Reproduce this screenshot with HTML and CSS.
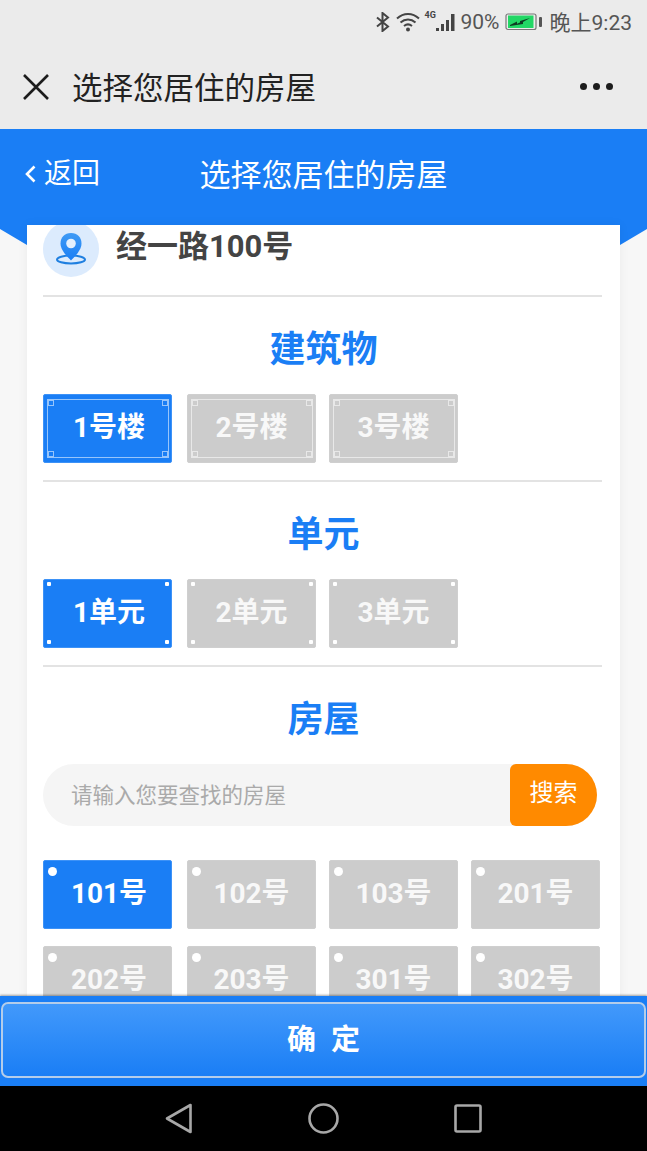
FILE: index.html
```html
<!DOCTYPE html>
<html lang="zh-CN">
<head>
    <meta charset="UTF-8">
    <title>选择您居住的房屋</title>
    <link rel="stylesheet" href="styles.css">
</head>
<body>
<div class="screen">
    <div class="status-bar">
        <svg class="status-bt" width="14" height="20" viewBox="0 0 14 20"><path d="M1 5.500 12 14.500 6.500 19V1L12 5.500 1 14.500" fill="none" stroke="#444" stroke-width="2"/></svg>
        <svg class="status-wifi" width="24" height="20" viewBox="0 0 24 20"><path d="M1 6.500C7.500 .5 16.500 .5 23 6.500M4.500 10.500C9 6.500 15 6.500 19.500 10.500M8 14C10.500 12 13.500 12 16 14" fill="none" stroke="#444" stroke-width="2"/><circle cx="12" cy="17.500" r="2" fill="#444"/></svg>
        <span class="status-net">4G</span>
        <svg class="status-signal" width="20" height="19" viewBox="0 0 20 19"><path d="M0 15h3v3H0zM5 11h3v7H5zM10 7h3v11h-3zM15 1h3.500v17H15z" fill="#444"/></svg>
        <span class="status-text status-percent">90%</span>
        <svg class="status-battery" width="37" height="18" viewBox="0 0 37 18">
            <rect x="1" y="1" width="30" height="15.500" rx="2" fill="none" stroke="#777" stroke-width="1.200"/>
            <rect x="3" y="2.500" width="25.500" height="12.500" fill="#22d765"/>
            <path d="M5 12 12 8.500V11L12.500 10.500 15 9.500 15 8 25 5 18 9 18 11 5 13z" fill="#0d3b22"/>
            <rect x="34" y="4" width="3" height="10" rx="1" fill="#555"/>
        </svg>
        <span class="status-text status-time">晚上9:23</span>
    </div>

    <div class="title-bar">
        <svg class="title-close" width="26" height="26" viewBox="0 0 26 26"><path d="M1 1 25 25M25 1 1 25" stroke="#1c1c1c" stroke-width="2.600"/></svg>
        <span class="title-text">选择您居住的房屋</span>
        <span class="title-more"><i></i><i></i><i></i></span>
    </div>

    <div class="page">
        <div class="page-header">
            <div class="page-back">
                <svg width="11" height="18" viewBox="0 0 11 18"><path d="M9.500 1.500 2 9l7.500 7.500" fill="none" stroke="#fff" stroke-width="2.600"/></svg>
                <span>返回</span>
            </div>
            <div class="page-title">选择您居住的房屋</div>
        </div>

        <div class="card">
            <div class="address">
                <div class="address-icon">
                    <svg width="32" height="34" viewBox="0 0 32 34">
                        <defs>
                            <linearGradient id="pinFill" x1="0" y1="0" x2="0" y2="1">
                                <stop offset="0" stop-color="#3f9bf5"/>
                                <stop offset="1" stop-color="#1a7ef5"/>
                            </linearGradient>
                        </defs>
                        <ellipse cx="16" cy="27.500" rx="14" ry="4" fill="none" stroke="#1f7fe0" stroke-width="2"/>
                        <path d="M16 1C9.500 1 5.500 5.500 5.500 11.500 5.500 18 12 24.500 16 28.500 20 24.500 26.500 18 26.500 11.500 26.500 5.500 22.500 1 16 1z" fill="url(#pinFill)"/>
                        <circle cx="16" cy="11.500" r="4.800" fill="#e4f0fd"/>
                    </svg>
                </div>
                <div class="address-name">经一路100号</div>
            </div>

            <div class="section">
                <div class="section-title">建筑物</div>
                <div class="tiles">
                    <div class="tile tile-active">1号楼<i class="tile-frame"><b></b><b></b><b></b><b></b></i></div>
                    <div class="tile">2号楼<i class="tile-frame"><b></b><b></b><b></b><b></b></i></div>
                    <div class="tile">3号楼<i class="tile-frame"><b></b><b></b><b></b><b></b></i></div>
                </div>
            </div>

            <div class="section">
                <div class="section-title">单元</div>
                <div class="tiles">
                    <div class="tile tile-active">1单元<i class="tile-dots"><b></b><b></b><b></b><b></b></i></div>
                    <div class="tile">2单元<i class="tile-dots"><b></b><b></b><b></b><b></b></i></div>
                    <div class="tile">3单元<i class="tile-dots"><b></b><b></b><b></b><b></b></i></div>
                </div>
            </div>

            <div class="section section-last">
                <div class="section-title">房屋</div>
                <div class="search">
                    <input class="search-input" type="text" placeholder="请输入您要查找的房屋">
                    <button class="search-btn">搜索</button>
                </div>
                <div class="tiles">
                    <div class="tile tile-active tile-room">101号</div>
                    <div class="tile tile-room">102号</div>
                    <div class="tile tile-room">103号</div>
                    <div class="tile tile-room">201号</div>
                    <div class="tile tile-room">202号</div>
                    <div class="tile tile-room">203号</div>
                    <div class="tile tile-room">301号</div>
                    <div class="tile tile-room">302号</div>
                </div>
            </div>
        </div>
    </div>

    <div class="footer">
        <button class="confirm">确 定</button>
    </div>

    <div class="nav-bar">
        <svg width="28" height="31" viewBox="0 0 28 31"><path d="M2 15.500 25.500 2V29z" fill="none" stroke="#a8a8a8" stroke-width="2.600" stroke-linejoin="round"/></svg>
        <svg width="31" height="31" viewBox="0 0 31 31"><circle cx="15.500" cy="15.500" r="14" fill="none" stroke="#a8a8a8" stroke-width="2.600"/></svg>
        <svg width="28" height="29" viewBox="0 0 28 29"><rect x="1.500" y="1.500" width="25" height="26" rx="1.500" fill="none" stroke="#a8a8a8" stroke-width="2.600"/></svg>
    </div>
</div>
</body>
</html>
```

FILE: styles.css
```css
body {
    margin: 0;
    font-family: Roboto, "Noto Sans CJK SC", sans-serif;
}

.screen {
    display: flex;
    flex-direction: column;
    width: 647px;
    height: 1151px;
    overflow: hidden;
    background-color: #f7f7f7;
}

/* status bar */
.status-bar {
    display: flex;
    align-items: center;
    justify-content: flex-end;
    flex: none;
    height: 44px;
    padding-right: 15px;
    background-color: #ebebeb;
    color: #555;
}

.status-text {
    font-size: 21px;
}

.status-bt {
    margin-right: 6px;
}

.status-wifi {
    margin-right: 5px;
}

.status-net {
    align-self: flex-start;
    width: 11px;
    margin: 10px 0 0;
    font-size: 9px;
    font-weight: bold;
    color: #444;
}

.status-percent {
    margin: 0 5px 0 5px;
}

.status-battery {
    margin-right: 8px;
}

.status-time {
    margin-bottom: 2px;
}

/* wechat title */
.title-bar {
    display: flex;
    align-items: center;
    flex: none;
    height: 85px;
    padding: 0 34px 0 23px;
    background-color: #ebebeb;
}

.title-text {
    flex: 1;
    margin: 0 0 2px 23px;
    font-size: 30.5px;
    color: #222;
}

.title-more {
    display: flex;
    gap: 6px;
}

.title-more i {
    width: 7px;
    height: 7px;
    border-radius: 50%;
    background-color: #1c1c1c;
}

/* page */
.page {
    flex: 1;
    min-height: 0;
    overflow: hidden;
}

.page-header {
    position: relative;
    display: flex;
    justify-content: center;
    height: 96px;
    background-color: #1a7ef5;
    color: #fff;
}

.page-header::after {
    content: "";
    position: absolute;
    top: 100%;
    left: 0;
    right: 0;
    height: 20px;
    background-color: #1a7ef5;
    clip-path: polygon(0 0, 100% 0, 100% 4px, calc(100% - 27px) 20px, 27px 20px, 0 4px);
}

.page-back {
    position: absolute;
    left: 25px;
    top: 22px;
    display: flex;
    align-items: center;
    gap: 8px;
    font-size: 28px;
}

.page-back svg {
    margin-top: 6px;
}

.page-title {
    margin-top: 21px;
    font-size: 31px;
}

.card {
    position: relative;
    margin: 0 27px;
    padding: 0 18px 0 16px;
    height: 800px;
    overflow: hidden;
    background-color: #fff;
    box-shadow: 0 0 10px rgba(0, 0, 0, .06);
}

.address {
    display: flex;
    align-items: flex-start;
    gap: 17px;
    height: 74px;
    margin-top: -4px;
    border-bottom: 2px solid #e3e3e3;
}

.address-icon {
    display: flex;
    align-items: center;
    justify-content: center;
    width: 56px;
    height: 56px;
    border-radius: 50%;
    background-color: #dcebfd;
}

.address-name {
    margin-top: 2px;
    font-size: 31px;
    line-height: 48px;
    font-weight: bold;
    color: #444;
}

.section {
    padding: 28px 0 17px;
    border-bottom: 2px solid #e3e3e3;
}

.section-last {
    border-bottom: 0;
}

.section-title {
    margin-bottom: 19px;
    padding-left: 2px;
    font-size: 36px;
    line-height: 50px;
    font-weight: bold;
    text-align: center;
    color: #1a7ef5;
}

.tiles {
    display: grid;
    grid-template-columns: 144px 142px 142px 129px;
    row-gap: 17px;
}

.tile {
    position: relative;
    box-sizing: border-box;
    width: 129px;
    height: 69px;
    border: 1px solid #cfcfcf;
    border-radius: 2px;
    background-color: #ccc;
    font-size: 28px;
    line-height: 65px;
    font-weight: bold;
    text-align: center;
    color: #f8f8f8;
}

.tile:nth-child(4n+1) {
    padding-left: 3px;
}

.tile-active {
    border-color: #3d92f7;
    background-color: #1a7ef5;
    color: #fff;
}

/* inner line with little squares */
.tile-frame {
    position: absolute;
    top: 4px;
    left: 3px;
    right: 2px;
    bottom: 4px;
    border: 1px solid rgba(255, 255, 255, .55);
}

.tile-frame b {
    position: absolute;
    width: 4px;
    height: 4px;
    border: 1px solid rgba(255, 255, 255, .55);
}

.tile-frame b:nth-child(1), .tile-frame b:nth-child(2) {
    top: 0;
}

.tile-frame b:nth-child(3), .tile-frame b:nth-child(4) {
    bottom: 0;
}

.tile-frame b:nth-child(odd) {
    left: 0;
}

.tile-frame b:nth-child(even) {
    right: 0;
}

.tile-dots {
    position: absolute;
    top: 2px;
    left: 3px;
    right: 2px;
    bottom: 3px;
}

.tile-dots b {
    position: absolute;
    width: 4px;
    height: 4px;
    border-radius: 1px;
    background-color: #fff;
}

.tile-dots b:nth-child(1), .tile-dots b:nth-child(2) {
    top: 0;
}

.tile-dots b:nth-child(3), .tile-dots b:nth-child(4) {
    bottom: 0;
}

.tile-dots b:nth-child(odd) {
    left: 0;
}

.tile-dots b:nth-child(even) {
    right: 0;
}

.tile-room::before {
    content: "";
    position: absolute;
    top: 6px;
    left: 4px;
    width: 9px;
    height: 9px;
    border-radius: 50%;
    background-color: #fff;
}

.search {
    display: flex;
    width: 554px;
    height: 62px;
    margin-bottom: 34px;
    border-radius: 31px;
    background-color: #f5f5f5;
}

.search-input {
    flex: 1;
    min-width: 0;
    padding: 0 0 0 28px;
    border: 0;
    outline: 0;
    background: transparent;
    font-family: inherit;
    font-size: 21.5px;
    color: #333;
}

.search-input::placeholder {
    color: #aaa;
}

.search-btn {
    width: 87px;
    padding: 0 0 9px;
    border: 0;
    border-radius: 6px 31px 31px 6px;
    background-color: #ff8a00;
    font-family: inherit;
    font-size: 24px;
    color: #fff;
}

/* bottom */
.footer {
    position: relative;
    flex: none;
    box-sizing: border-box;
    height: 90px;
    padding: 6px 1px 8px;
    background-color: #1a7ef5;
    box-shadow: 0 -1px 2px rgba(0, 0, 0, .35);
}

.confirm {
    display: block;
    width: 100%;
    height: 100%;
    padding: 0 0 6px;
    border: 2px solid #b4cdea;
    border-radius: 7px;
    background: linear-gradient(#4299fb, #1a7ef5);
    font-family: inherit;
    font-size: 29px;
    font-weight: bold;
    word-spacing: 8px;
    color: #fff;
}

.nav-bar {
    display: flex;
    align-items: center;
    justify-content: center;
    gap: 115px;
    flex: none;
    height: 65px;
    background-color: #000;
}
```
